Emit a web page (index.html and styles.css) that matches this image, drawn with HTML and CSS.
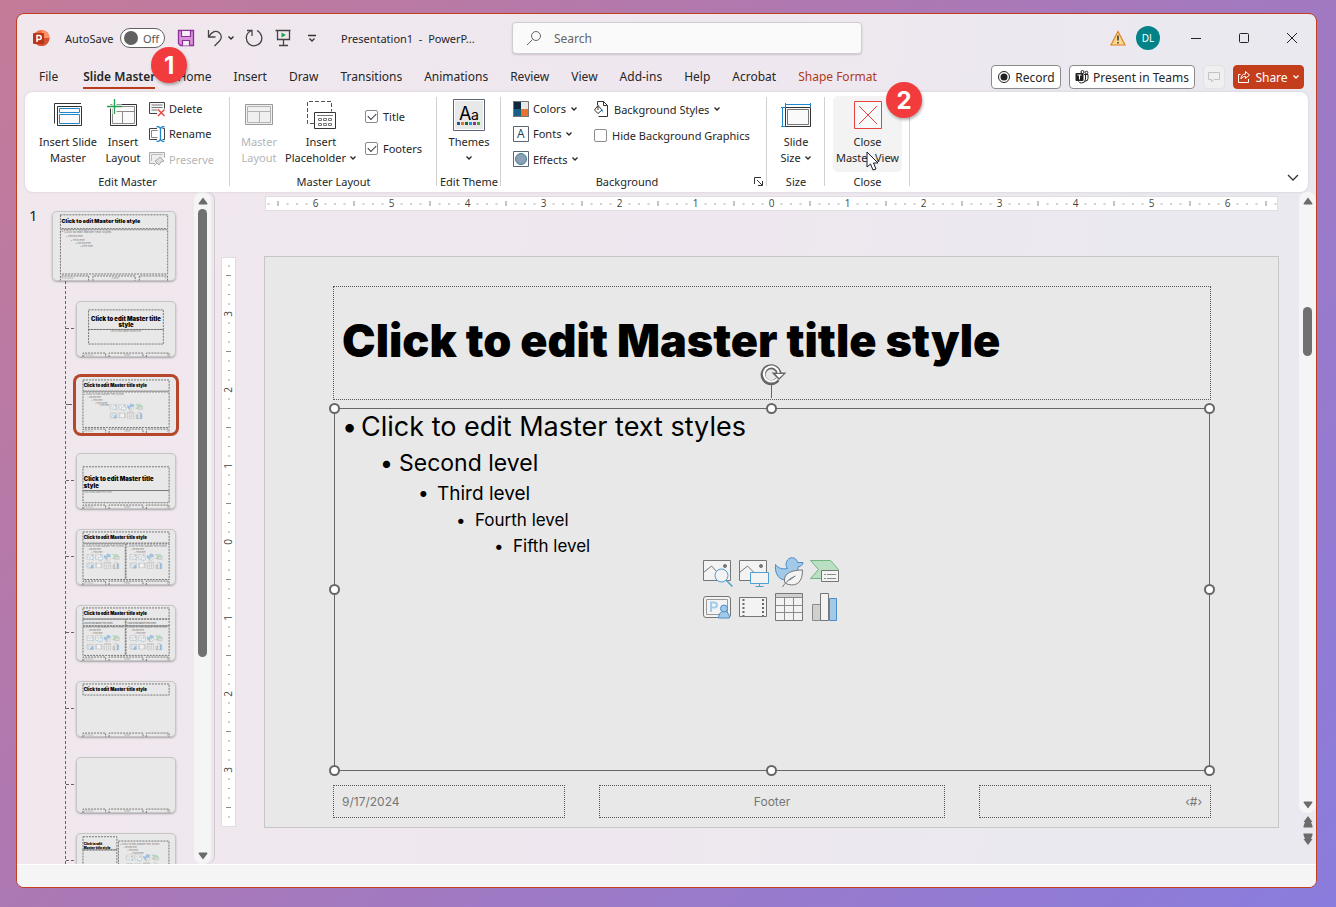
FILE: index.html
```html
<!DOCTYPE html>
<html lang="en">
<head>
    <meta charset="UTF-8">
    <meta name="viewport" content="width=device-width, initial-scale=1.0">
    <title>Presentation1 - PowerPoint</title>
    <link rel="stylesheet" href="styles.css">
</head>
<body>
    <!-- Shared drawings -->
    <svg class="defs" aria-hidden="true">
        <symbol id="chevron" viewBox="0 0 8 8"><path d="M1.5 2.5L4 5l2.500-2.500" fill="none" stroke="currentColor" stroke-width="1.300"/></symbol>
        <symbol id="arrow-up" viewBox="0 0 10 8"><path d="M5 .5L9.500 6.500q0 1-1 1h-7q-1 0-1-1z"/></symbol>
        <symbol id="arrow-down" viewBox="0 0 10 8"><path d="M5 7.500L9.500 1.500q0-1-1-1h-7q-1 0-1 1z"/></symbol>

        <!-- Eight content icons of an empty placeholder -->
        <symbol id="content-icons" viewBox="0 0 137 66">
            <g fill="#f3f3f3" stroke="#767676">
                <path d="M.5 3.500h27v20H.5zM36.500 3.500h27v20h-27z"/>
                <path d="M.5 15.500L8.500 9l13 14M36.500 15.500L44.500 9l9 9" fill="none"/>
                <circle cx="22" cy="9" r="1.500" fill="#767676"/>
                <circle cx="58" cy="9" r="1.500" fill="#767676"/>
            </g>
            <g fill="#f3f3f3" stroke="#4f9fd0">
                <path d="M23.500 23.500l6 6" stroke-width="1.500"/>
                <circle cx="18.500" cy="18.500" r="6.500"/>
                <path d="M47.500 15.500h18v11h-18zM56.500 27v3M52.500 29.500h8"/>
            </g>
            <path d="M72.500 7.500c3 4 7 5 12 4-1.500-2-2-4-1-6.500 2-6 10-5.500 11 .5h5.500c0 2-2 4-5 4.500 0 6-4 13-10 13-9 1-13.500-6-12.500-15.500z" fill="#a3c9e8" stroke="#4a8ec9"/>
            <path d="M99.500 13c-10 0-19 3-18 11 0 2 2 3 4 3.500 9 2 14-3 14-14.500zM79.500 30c4-6 8-9 13-11" fill="#f3f3f3" stroke="#767676"/>
            <path d="M107.500 3.500h20l8 9-8 9h-20l8-9z" fill="#bbdfc2" stroke="#72b583"/>
            <path d="M118.500 13.500h17v11h-17z" fill="#f3f3f3" stroke="#767676"/>
            <path d="M121 17.500h2m1 0h9M121 21.500h2m1 0h9" stroke="#8a8a8a"/>
            <rect x=".5" y="39.500" width="27" height="21" rx="2.500" fill="#f3f3f3" stroke="#767676"/>
            <path d="M3.500 42.500h21v15h-21z" fill="none" stroke="#9a9a9a"/>
            <path d="M8 55v-9.500h3c4 0 4 5 0 5H8" fill="none" stroke="#a3cdea" stroke-width="2"/>
            <path d="M15.500 61c0-9 11-9 11 0z" fill="#a3c9e8" stroke="#4a8ec9"/>
            <circle cx="21" cy="51.500" r="3.500" fill="#a3c9e8" stroke="#4a8ec9"/>
            <path d="M36.500 40.500h27v19h-27z" fill="#f3f3f3" stroke="#767676"/>
            <path d="M40.500 42v17M60 42v17" stroke="#686868" stroke-width="2" stroke-dasharray="2 2"/>
            <path d="M72.500 36.500h27v27h-27z" fill="#f3f3f3" stroke="#767676"/>
            <path d="M73 37h26v3H73z" fill="#d0d0ce"/>
            <path d="M72.500 40.500h27m-27 8h27m-27 7h27m-18-15v23m9-23v23" fill="none" stroke="#8a8a8a"/>
            <path d="M109.500 47.500h8v16h-8z" fill="#d0d0ce" stroke="#8a8a8a"/>
            <path d="M126.500 41.500h7v22h-7z" fill="#a3c9e8" stroke="#4a8ec9"/>
            <path d="M117.500 36.500h8v27h-8z" fill="#f3f3f3" stroke="#767676"/>
        </symbol>

        <!-- Thumbnail parts, in slide coordinates -->
        <symbol id="part-footers" viewBox="0 0 1014 570">
            <path class="frame" d="M69 570v-40h231v40M335 570v-40h345v40M714 570v-40h231v40"/>
            <g class="tiny faded"><text x="78" y="556">9/17/2024</text><text x="489" y="556">Footer</text><text x="922" y="556">#</text></g>
        </symbol>
        <symbol id="part-title" viewBox="0 0 1014 570">
            <path class="frame" d="M69 30h877v113H69z"/>
            <text class="headline" x="78" y="101">Click to edit Master title style</text>
        </symbol>
        <symbol id="part-levels" viewBox="0 0 1014 570">
            <text class="level" x="78" y="180">• Click to edit Master text styles</text>
            <g class="tiny"><text x="115" y="214">• Second level</text><text x="153" y="243">• Third level</text><text x="191" y="270">• Fourth level</text><text x="229" y="296">• Fifth level</text></g>
        </symbol>
        <symbol id="part-half" viewBox="0 0 1014 570">
            <text class="level" x="78" y="180">• Click to edit Master text styles</text>
            <g class="tiny"><text x="115" y="214">• Second level</text><text x="153" y="243">• Third level</text></g>
            <use href="#content-icons" x="90" y="250" width="370" height="160"/>
        </symbol>
    </svg>

    <div class="window">
        <header class="titlebar">
            <svg class="app-logo" viewBox="0 0 18 18" aria-hidden="true">
                <circle cx="9.500" cy="9" r="8" fill="#ed6c47"/>
                <path d="M9.500 1a8 8 0 0 1 8 8h-8z" fill="#ff9068"/>
                <path d="M1.500 9h16a8 8 0 0 1-16 0z" fill="#d35230"/>
                <rect x="1" y="4" width="11" height="11" rx="1" fill="#b7351a"/>
                <path d="M5 13V6.500h2c3 0 3 4 0 4H5" fill="none" stroke="#fff" stroke-width="1.500"/>
            </svg>
            <div class="autosave">
                <span id="autosave-label">AutoSave</span>
                <button class="toggle" role="switch" aria-checked="false" aria-labelledby="autosave-label"><i class="knob"></i>Off</button>
            </div>
            <div class="quick-access">
                <button class="icon-btn" aria-label="Save">
                    <svg width="18" height="18" viewBox="0 0 18 18"><path d="M1.500 1.500h15v15H3.500l-2-2z" fill="#d893dc" stroke="#8d2f99" stroke-width="1.300"/><path d="M4.500 1.500h9v6h-9zM5.500 16.500v-5h7v5" fill="#f7edf7" stroke="#8d2f99" stroke-width="1.200"/></svg>
                </button>
                <button class="icon-btn" aria-label="Undo">
                    <svg width="18" height="18" viewBox="0 0 18 18"><path d="M2.500 1v7h7M3 7.500C6 2.500 10 1 13 3.500s3 6 .5 8.500L8.500 17" fill="none" stroke="#444" stroke-width="1.300"/></svg>
                </button>
                <button class="icon-btn narrow" aria-label="Undo history"><svg class="chev"><use href="#chevron"/></svg></button>
                <button class="icon-btn" aria-label="Repeat">
                    <svg width="18" height="18" viewBox="0 0 18 18"><path d="M2 1.500h5V7M7 1.500C-.5 4 .5 12 4 15s9 2 11.500-1.500S17 4 12 1.500" fill="none" stroke="#444" stroke-width="1.300"/></svg>
                </button>
                <button class="icon-btn" aria-label="Start from beginning">
                    <svg width="18" height="18" viewBox="0 0 18 18"><path d="M1.500 1.500h15M3.500 1.500v9h12v-9M9.500 10.500v6M5 16.500h9" fill="none" stroke="#444" stroke-width="1.300"/><path d="M7.500 3.500v5l4.500-2.500z" fill="#21a150"/></svg>
                </button>
                <button class="icon-btn last" aria-label="Customize toolbar">
                    <svg width="10" height="10" viewBox="0 0 10 10"><path d="M1 2.500h8M2.500 5.500L5 8l2.500-2.500" fill="none" stroke="#333" stroke-width="1.300"/></svg>
                </button>
            </div>
            <div class="doc-name">Presentation1&nbsp; -&nbsp; PowerP...</div>
            <label class="search">
                <svg width="16" height="16" viewBox="0 0 16 16" aria-hidden="true"><circle cx="10" cy="6" r="4.500" fill="none" stroke="#666"/><path d="M6.500 9.500L1 15" stroke="#666"/></svg>
                <input type="text" placeholder="Search" aria-label="Search">
            </label>
            <div class="account">
                <svg width="16" height="16" viewBox="0 0 16 16" aria-label="Warning"><path d="M8 1.500L15 15H1z" fill="#fbd98e" stroke="#e08122" stroke-width="1.200"/><path d="M8 5.500v5M8 12v1.500" stroke="#333" stroke-width="1.500"/></svg>
                <button class="avatar">DL</button>
            </div>
            <div class="window-controls">
                <button aria-label="Minimize"><svg width="12" height="12"><path d="M1 6.500h10" stroke="#222"/></svg></button>
                <button aria-label="Maximize"><svg width="12" height="12"><rect x="1.500" y="1.500" width="9" height="9" rx="1" fill="none" stroke="#222"/></svg></button>
                <button aria-label="Close"><svg width="12" height="12"><path d="M1 1l10 10M11 1L1 11" stroke="#222"/></svg></button>
            </div>
        </header>

        <nav class="tabs">
            <button class="tab file">File</button>
            <div class="tab-wrap">
                <button class="tab active">Slide Master</button>
                <span class="badge badge-one">1</span>
            </div>
            <button class="tab">Home</button>
            <button class="tab">Insert</button>
            <button class="tab">Draw</button>
            <button class="tab">Transitions</button>
            <button class="tab">Animations</button>
            <button class="tab">Review</button>
            <button class="tab">View</button>
            <button class="tab">Add-ins</button>
            <button class="tab">Help</button>
            <button class="tab">Acrobat</button>
            <button class="tab contextual">Shape Format</button>
            <div class="tab-actions">
                <button class="action record"><svg width="14" height="14" viewBox="0 0 14 14"><circle cx="7" cy="7" r="5.500" fill="none" stroke="#222"/><circle cx="7" cy="7" r="3.500" fill="#222"/></svg>Record</button>
                <button class="action teams"><svg width="14" height="14" viewBox="0 0 14 14"><rect x=".5" y="3" width="8" height="8" rx="1" fill="#222"/><path d="M2.500 5h4M4.500 5v4.500" stroke="#fff"/><circle cx="7.500" cy="2" r="1.500" fill="none" stroke="#222"/><circle cx="11.500" cy="2.500" r="1.300" fill="none" stroke="#222"/><path d="M9 4.500h4v4q0 3-3 2.500M10.500 5v4q0 4-4 4-2 0-3-1.500" fill="none" stroke="#222"/></svg>Present in Teams</button>
                <button class="action comment" aria-label="Comments"><svg width="14" height="14" viewBox="0 0 14 14"><path d="M1.500 2.500h11v7H7L4.500 12V9.500h-3z" fill="none" stroke="#c2c2c2"/></svg></button>
                <button class="action share"><svg width="14" height="14" viewBox="0 0 14 14"><path d="M3.500 4.500h-2v8h10V9M8.500 1.500l4 3.500-4 3.500v-2c-2.500 0-3.500 1-4.500 2.500 0-3 1.500-5 4.500-5z" fill="none" stroke="#fff"/></svg>Share<svg class="chev"><use href="#chevron"/></svg></button>
            </div>
        </nav>

        <section class="ribbon">
            <div class="group edit-master">
                <div class="group-body">
                    <button class="big">
                        <svg width="32" height="32" viewBox="0 0 32 32"><path d="M2.500 24.500v-20H29" fill="none" stroke="#333"/><path d="M5.500 7.500h24v19h-24z" fill="#fafafa" stroke="#333"/><path d="M7.500 9.500h20v4h-20zM7.500 15.500h20v9h-20z" fill="none" stroke="#1e87cf"/></svg>
                        Insert Slide<br>Master
                    </button>
                    <button class="big medium">
                        <svg width="32" height="32" viewBox="0 0 32 32"><path d="M3.500 5.500h26v21h-26z" fill="#fafafa" stroke="#333"/><path d="M5.500 7.500h22v17h-22zM5.500 12.500h22M15.500 12.500v12" fill="none" stroke="#8a8a8a"/><path d="M0 7.500h15M7.500 0v15" stroke="#fff" stroke-width="4"/><path d="M0 7.500h15M7.500 0v15" stroke="#21a150" stroke-width="1.300"/></svg>
                        Insert<br>Layout
                    </button>
                    <div class="stack">
                        <button class="small"><svg width="16" height="16" viewBox="0 0 16 16"><path d="M8 12.500H.5v-11h15v6" fill="#f6f6f6" stroke="#444"/><path d="M2.500 4h11M2.500 6.500h11M2.500 9h6" stroke="#777"/><path d="M9 8.500l6.500 6.500M15.500 8.500L9 15" stroke="#e8413c" stroke-width="1.300"/></svg>Delete</button>
                        <button class="small"><svg width="16" height="16" viewBox="0 0 16 16"><path d="M8 2.500H.5v11H8M13.500 2.500h2v11h-2" fill="none" stroke="#444"/><path d="M8.500 4.500h-6v7h6" fill="none" stroke="#888"/><path d="M7.500.5q4 0 4 3v9q0 3-4 3M15.500.5q-4 0-4 3v9q0 3 4 3" fill="none" stroke="#1e87cf" stroke-width="1.300"/></svg>Rename</button>
                        <button class="small" disabled><svg width="16" height="16" viewBox="0 0 16 16"><path d="M6 12.500H.5v-11h15v5" fill="#eee" stroke="#aaa"/><path d="M2.500 3.500h11M2.500 10V3.500" stroke="#bbb"/><path d="M11 6l4 4-3 1-2 3-4-4 3-2zM8 12l-3 3" fill="#ddd" stroke="#aaa"/></svg>Preserve</button>
                    </div>
                </div>
                <div class="group-label">Edit Master</div>
            </div>

            <div class="group master-layout">
                <div class="group-body">
                    <button class="big medium" disabled>
                        <svg width="32" height="32" viewBox="0 0 32 32"><path d="M2.500 5.500h27v20h-27z" fill="#f0f0f0" stroke="#999"/><path d="M4.500 7.500h23v16h-23zM4.500 12.500h23M16.500 12.500v11" fill="none" stroke="#b3b3b3"/></svg>
                        Master<br>Layout
                    </button>
                    <button class="big wide">
                        <svg width="32" height="32" viewBox="0 0 32 32"><path d="M9 24.500H2.500v-22h24v10" fill="none" stroke="#555" stroke-dasharray="4 2"/><path d="M9.500 13.500h21v16h-21z" fill="#fff" stroke="#333"/><path d="M12 16.500h16M13.500 19.500h3v2h-3zM18.500 19.500h3v2h-3zM23.500 19.500h3v2h-3zM13.500 24.500h3v2h-3zM18.500 24.500h3v2h-3zM23.500 24.500h3v2h-3z" fill="none" stroke="#777"/></svg>
                        Insert<br>Placeholder <svg class="chev"><use href="#chevron"/></svg>
                    </button>
                    <div class="checks">
                        <label class="check"><input type="checkbox" checked>Title</label>
                        <label class="check"><input type="checkbox" checked>Footers</label>
                    </div>
                </div>
                <div class="group-label">Master Layout</div>
            </div>

            <div class="group edit-theme">
                <div class="group-body">
                    <button class="big">
                        <svg width="32" height="32" viewBox="0 0 32 32"><path d="M.5.5h31v31H.5z" fill="#fff" stroke="#5b6577"/><path d="M2 2h28v28H2z" fill="#e8e8e8"/><text class="aa" x="6" y="21">A</text><text class="aa lower" x="18" y="21">a</text><path d="M4 23h3v3H4z" fill="#1b5e8c"/><path d="M8 23h3v3H8z" fill="#e97132"/><path d="M12 23h3v3h-3z" fill="#196b24"/><path d="M16 23h3v3h-3z" fill="#0f9ed5"/><path d="M20 23h3v3h-3z" fill="#a02b93"/><path d="M24 23h3v3h-3z" fill="#4ea72e"/></svg>
                        Themes<br><svg class="chev"><use href="#chevron"/></svg>
                    </button>
                </div>
                <div class="group-label">Edit Theme</div>
            </div>

            <div class="group background">
                <div class="group-body">
                    <div class="stack first">
                        <button class="small"><svg width="16" height="16" viewBox="0 0 16 16"><path d="M0 0h8v8H0z" fill="#0e2841"/><path d="M8 0h8v8H8z" fill="#e8e8e8"/><path d="M0 8h8v8H0z" fill="#156082"/><path d="M8 8h8v8H8z" fill="#e97132"/><path d="M.5.5h15v15H.5z" fill="none" stroke="#777"/></svg>Colors<svg class="chev"><use href="#chevron"/></svg></button>
                        <button class="small"><svg width="16" height="16" viewBox="0 0 16 16"><path d="M.5.5h15v15H.5z" fill="#fff" stroke="#5b6577"/><text class="font-a" x="4" y="12">A</text></svg>Fonts<svg class="chev"><use href="#chevron"/></svg></button>
                        <button class="small"><svg width="16" height="16" viewBox="0 0 16 16"><path d="M.5.5h15v15H.5z" fill="#fff" stroke="#5b6577"/><circle cx="8" cy="8" r="5.500" fill="#8ba0b4" stroke="#3d7f96"/></svg>Effects<svg class="chev"><use href="#chevron"/></svg></button>
                    </div>
                    <div class="stack second">
                        <button class="small"><svg width="16" height="16" viewBox="0 0 16 16"><path d="M3.500 4V.5h6l4 4v11h-9M9.500.5v4h4" fill="none" stroke="#333"/><path d="M4 4.500l4 4.500-4 3.500L.5 9zM4 4.500V9" fill="#fff" stroke="#333"/><path d="M7 8l2 1v3z" fill="#3f9bdc"/></svg>Background Styles<svg class="chev"><use href="#chevron"/></svg></button>
                        <label class="check"><input type="checkbox">Hide Background Graphics</label>
                    </div>
                </div>
                <div class="group-label">Background</div>
                <button class="launcher" aria-label="Format background"><svg width="9" height="9" viewBox="0 0 9 9"><path d="M.5 7V.5H7M3 3l5 5M8.500 4v4.500H4" fill="none" stroke="#333"/></svg></button>
            </div>

            <div class="group size">
                <div class="group-body">
                    <button class="big">
                        <svg width="32" height="32" viewBox="0 0 32 32"><path d="M5.500 8.500h25v19h-25z" fill="#fafafa" stroke="#333"/><path d="M7.500 10.500h21v15h-21z" fill="none" stroke="#777"/><path d="M5.500 4v4M5.500 5.500h25M30.500 4v4M1 8.500h4M2.500 8.500v19M1 27.500h4" fill="none" stroke="#1e87cf"/></svg>
                        Slide<br>Size <svg class="chev"><use href="#chevron"/></svg>
                    </button>
                </div>
                <div class="group-label">Size</div>
            </div>

            <div class="group close">
                <div class="group-body">
                    <button class="big hovered">
                        <svg width="32" height="32" viewBox="0 0 32 32"><path d="M2.500 2.500h27v27h-27z" fill="#fafafa" stroke="#e8413c"/><path d="M7 7l18 18M25 7L7 25" stroke="#e8413c"/></svg>
                        Close<br>Master View
                    </button>
                    <span class="badge badge-two">2</span>
                    <svg class="cursor" width="13" height="20" viewBox="0 0 13 20" aria-hidden="true"><path d="M1 1v15l3.500-3 2.500 6 3-1-2.500-6H12z" fill="#fff" stroke="#1a1a2a"/></svg>
                </div>
                <div class="group-label">Close</div>
            </div>
            <button class="collapse" aria-label="Collapse ribbon"><svg width="12" height="8"><path d="M1 1l5 5 5-5" fill="none" stroke="#333" stroke-width="1.300"/></svg></button>
        </section>

        <main class="workspace">
            <aside class="slides">
                <span class="number">1</span>
                <button class="thumb master" aria-label="Slide master">
                    <svg viewBox="0 0 1014 570"><use href="#part-title"/><path class="frame" d="M69 152h877v362H69z"/><use href="#part-levels"/><use href="#part-footers"/></svg>
                </button>
                <div class="layouts">
                    <button class="thumb" aria-label="Title slide">
                        <svg viewBox="0 0 1014 570"><path class="frame" d="M126 90h761v200H126zM126 290h761v148H126z"/><g class="headline large" text-anchor="middle"><text x="507" y="200">Click to edit Master title</text><text x="507" y="268">style</text></g><text class="tiny" x="507" y="316" text-anchor="middle">Click to edit Master subtitle style</text><use href="#part-footers"/></svg>
                    </button>
                    <button class="thumb selected" aria-label="Title and content">
                        <svg viewBox="0 0 1014 570"><use href="#part-title"/><path class="frame" d="M69 152h877v362H69z"/><use href="#part-levels"/><use href="#content-icons" x="320" y="270" width="384" height="160"/><use href="#part-footers"/></svg>
                    </button>
                    <button class="thumb" aria-label="Section header">
                        <svg viewBox="0 0 1014 570"><path class="frame" d="M69 140h877v242H69zM69 382h877v124H69z"/><g class="headline large"><text x="78" y="288">Click to edit Master title</text><text x="78" y="356">style</text></g><text class="tiny" x="78" y="404">Click to edit Master text styles</text><use href="#part-footers"/></svg>
                    </button>
                    <button class="thumb" aria-label="Two content">
                        <svg viewBox="0 0 1014 570"><use href="#part-title"/><path class="frame" d="M69 152h431v362H69zM507 152h439v362H507z"/><use href="#part-half"/><use href="#part-half" x="438"/><use href="#part-footers"/></svg>
                    </button>
                    <button class="thumb" aria-label="Comparison">
                        <svg viewBox="0 0 1014 570"><use href="#part-title"/><path class="frame" d="M69 143h431v70H69zM507 143h439v70H507zM69 213h431v300H69zM507 213h439v300H507z"/><g class="tiny strong"><text x="78" y="196">Click to edit Master text styles</text><text x="520" y="196">Click to edit Master text styles</text></g><use href="#part-half" y="54"/><use href="#part-half" x="438" y="54"/><use href="#part-footers"/></svg>
                    </button>
                    <button class="thumb" aria-label="Title only">
                        <svg viewBox="0 0 1014 570"><use href="#part-title"/><use href="#part-footers"/></svg>
                    </button>
                    <button class="thumb" aria-label="Blank">
                        <svg viewBox="0 0 1014 570"><use href="#part-footers"/></svg>
                    </button>
                    <button class="thumb" aria-label="Content with caption">
                        <svg viewBox="0 0 1014 570"><path class="frame" d="M69 38h345v134H69zM69 172h345v320H69zM430 82h514v400H430z"/><g class="headline sub"><text x="78" y="126">Click to edit</text><text x="78" y="164">Master title style</text></g><text class="level" x="440" y="118">• Click to edit Master text styles</text><g class="tiny"><text x="480" y="152">• Second level</text><text x="515" y="184">• Third level</text><text x="560" y="214">• Fourth level</text></g><use href="#content-icons" x="490" y="215" width="370" height="160"/></svg>
                    </button>
                </div>
            </aside>
            <div class="scrollbar left">
                <svg class="arrow"><use href="#arrow-up"/></svg>
                <div class="track"><div class="grip long"></div></div>
                <svg class="arrow"><use href="#arrow-down"/></svg>
            </div>

            <div class="editor">
                <svg class="ruler horizontal" height="13" aria-hidden="true">
                    <!-- One inch of ticks, used by both rulers -->
                    <pattern id="inch" x="-38" y="0" width="76" height="13" patternUnits="userSpaceOnUse">
                        <path d="M.5 4v5" stroke="#8a8a8a"/>
                        <path d="M10 6v2M19.500 6v2M29 6v2M48 6v2M57.500 6v2M67 6v2" stroke="#a0a0a0"/>
                    </pattern>
                    <svg x="50%" overflow="visible">
                        <rect x="-600" width="1200" height="13" fill="url(#inch)"/>
                        <g><text x="-456" y="10">6</text><text x="-380" y="10">5</text><text x="-304" y="10">4</text><text x="-228" y="10">3</text><text x="-152" y="10">2</text><text x="-76" y="10">1</text><text x="0" y="10">0</text><text x="76" y="10">1</text><text x="152" y="10">2</text><text x="228" y="10">3</text><text x="304" y="10">4</text><text x="380" y="10">5</text><text x="456" y="10">6</text></g>
                    </svg>
                </svg>
                <svg class="ruler vertical" width="13" aria-hidden="true">
                    <svg y="50%" overflow="visible">
                        <g transform="rotate(-90)">
                            <rect x="-400" width="800" height="13" fill="url(#inch)"/>
                            <text x="228" y="10">3</text><text x="152" y="10">2</text><text x="76" y="10">1</text><text x="0" y="10">0</text><text x="-76" y="10">1</text><text x="-152" y="10">2</text><text x="-228" y="10">3</text>
                        </g>
                    </svg>
                </svg>

                <article class="slide">
                    <div class="placeholder title-box"><h1>Click to edit Master title style</h1></div>
                    <div class="content-box">
                        <ul>
                            <li class="l1">Click to edit Master text styles
                                <ul><li class="l2">Second level
                                    <ul><li class="l3">Third level
                                        <ul><li class="l4">Fourth level
                                            <ul><li class="l5">Fifth level</li></ul>
                                        </li></ul>
                                    </li></ul>
                                </li></ul>
                            </li>
                        </ul>
                        <svg class="insert-icons" width="137" height="66"><use href="#content-icons"/></svg>
                        <svg class="rotate" width="28" height="34" viewBox="0 0 28 34" aria-hidden="true">
                            <path d="M13.500 20v14" stroke="#666"/>
                            <path d="M19.500 15.500a8 8 0 1 1 1.500-6" fill="none" stroke="#666" stroke-width="5"/>
                            <path d="M13.500 8.500h15L21 16z" fill="#666"/>
                            <path d="M19 15a7.500 7.500 0 1 1 1.800-6" fill="none" stroke="#fff" stroke-width="2"/>
                            <path d="M17.500 10h8L21 14z" fill="#fff"/>
                        </svg>
                        <i class="handle n w"></i><i class="handle n c"></i><i class="handle n e"></i>
                        <i class="handle m w"></i><i class="handle m e"></i>
                        <i class="handle s w"></i><i class="handle s c"></i><i class="handle s e"></i>
                    </div>
                    <footer class="slide-footer">
                        <div class="placeholder">9/17/2024</div>
                        <div class="placeholder center">Footer</div>
                        <div class="placeholder right">‹#›</div>
                    </footer>
                </article>
            </div>

            <div class="right-rail">
                <div class="scrollbar">
                    <svg class="arrow"><use href="#arrow-up"/></svg>
                    <div class="track"><div class="grip short"></div></div>
                    <svg class="arrow"><use href="#arrow-down"/></svg>
                </div>
                <button class="page-btn" aria-label="Previous slide"><svg width="10" height="12"><path d="M5 0l4.500 6H8l1.500 4v1.500h-9V10L2 6H.5z"/></svg></button>
                <button class="page-btn" aria-label="Next slide"><svg width="10" height="12"><path d="M5 12L.5 6H2L.5 2V.5h9V2L8 6h1.500z"/></svg></button>
            </div>
        </main>
        <div class="statusbar"></div>
    </div>
</body>
</html>
```
FILE: styles.css
```css
* {
    box-sizing: border-box;
}
body {
    margin: 0;
    padding: 13px 19px 19px 16px;
    min-height: 100vh;
    display: flex;
    font-family: "Noto Sans", "Open Sans", sans-serif;
    font-size: 12px;
    color: #262626;
    background: linear-gradient(135deg, #c47b98 0%, #ad78b3 40%, #9a7aca 70%, #8a7cdd 100%);
}
button {
    font: inherit;
    color: inherit;
    padding: 0;
    border: none;
    background: none;
    cursor: pointer;
}
button:disabled {
    color: #b5b5b5;
}
svg {
    display: block;
    flex: none;
}
.defs {
    display: none;
}
.window {
    flex: 1;
    min-width: 0;
    display: flex;
    flex-direction: column;
    border: 1px solid #c43e1c;
    border-radius: 8px;
    overflow: hidden;
    background: linear-gradient(100deg, #f1e8ee 0%, #efe7ef 50%, #ebe9f0 80%);
}
.chev {
    width: 8px;
    height: 8px;
}

/* Title bar */
.titlebar {
    display: flex;
    align-items: center;
    height: 48px;
    padding-left: 15px;
}
.app-logo {
    width: 18px;
    height: 18px;
    margin-right: 15px;
}
.autosave {
    display: flex;
    align-items: center;
    justify-content: space-between;
    width: 100px;
    font-size: 11px;
}
.toggle {
    display: flex;
    align-items: center;
    gap: 5px;
    width: 45px;
    height: 20px;
    padding-left: 3px;
    border: 1px solid #616161;
    border-radius: 10px;
    background: #fff;
    color: #555;
}
.knob {
    width: 14px;
    height: 14px;
    border-radius: 50%;
    background: #616161;
}
.quick-access {
    display: flex;
    align-items: center;
    margin-left: 12px;
}
.icon-btn {
    margin-right: 11px;
}
.icon-btn.narrow {
    margin: 0 10px 0 -8px;
}
.icon-btn.last {
    margin: 0 0 0 4px;
}
.doc-name {
    margin-left: 24px;
    width: 171px;
    font-size: 11px;
    white-space: nowrap;
}
.search {
    display: flex;
    align-items: center;
    gap: 10px;
    width: 350px;
    height: 32px;
    padding-left: 13px;
    border: 1px solid #d0cdd0;
    border-radius: 4px;
    background: #fafafa;
    box-shadow: 0 1px 2px rgba(0, 0, 0, 0.15);
}
.search input {
    flex: 1;
    min-width: 0;
    border: none;
    outline: none;
    background: none;
    font: inherit;
}
.search input::placeholder {
    color: #666;
}
.account {
    display: flex;
    align-items: center;
    gap: 10px;
    margin-left: auto;
}
.avatar {
    width: 24px;
    height: 24px;
    border-radius: 50%;
    background: #038387;
    color: #fff;
    font-size: 10px;
}
.window-controls {
    display: flex;
    margin-left: 12px;
}
.window-controls button {
    display: grid;
    place-items: center;
    width: 48px;
    height: 32px;
}

/* Tabs */
.tabs {
    display: flex;
    align-items: center;
    gap: 22px;
    height: 30px;
    padding: 0 12px 0 22px;
    white-space: nowrap;
}
.tab {
    line-height: 24px;
}
.tab.file {
    margin-right: 3px;
}
.tab-wrap {
    position: relative;
}
.tab.active {
    font-weight: 600;
    box-shadow: inset 0 -2px #b83b1d;
}
.tab.contextual {
    color: #b03a1c;
}
.tab-actions {
    display: flex;
    gap: 8px;
    margin-left: auto;
}
.action {
    display: flex;
    align-items: center;
    justify-content: center;
    gap: 4px;
    height: 24px;
    border: 1px solid #8a8a8a;
    border-radius: 4px;
    background: #fff;
}
.record {
    width: 70px;
}
.teams {
    width: 126px;
}
.comment {
    width: 22px;
    border-color: #e3e1e3;
    background: #f0eff0;
}
.share {
    width: 71px;
    border-color: #c43e1c;
    background: #c43e1c;
    color: #fff;
}
.badge {
    position: absolute;
    z-index: 2;
    display: grid;
    place-items: center;
    width: 36px;
    height: 36px;
    border-radius: 50%;
    background: #f23b3d;
    box-shadow: 1px 2px 3px rgba(0, 0, 0, 0.3);
    color: #fff;
    font: bold 24px "Inter", sans-serif;
}
.badge-one {
    left: 68px;
    top: -18px;
}
.badge-two {
    right: -12px;
    top: -14px;
}

/* Ribbon */
.ribbon {
    position: relative;
    display: flex;
    height: 100px;
    margin: 0 8px;
    border-radius: 8px;
    background: #fff;
    box-shadow: 0 0 3px rgba(0, 0, 0, 0.12);
    font-size: 11px;
    white-space: nowrap;
}
.group {
    position: relative;
    padding-top: 4px;
}
.group::after {
    content: "";
    position: absolute;
    right: 0;
    top: 5px;
    bottom: 6px;
    width: 1px;
    background: #d1d1d1;
}
.group-body {
    position: relative;
    display: flex;
    height: 76px;
}
.group-label {
    line-height: 20px;
    text-align: center;
}
.edit-master {
    width: 205px;
}
.master-layout {
    width: 207px;
}
.edit-theme {
    width: 64px;
}
.background {
    width: 266px;
}
.background .group-label {
    padding-right: 14px;
}
.size {
    width: 58px;
}
.close {
    width: 85px;
}
.edit-master .group-body {
    padding-left: 11px;
}
.master-layout .group-body {
    padding-left: 5px;
}
.close .group-body {
    padding: 0 8px;
}
.big {
    display: block;
    width: 64px;
    padding: 3px 0 6px;
    line-height: 16px;
    text-align: center;
    border-radius: 5px;
}
.big > svg:first-child {
    margin: 0 auto 3px;
}
.big .chev {
    display: inline-block;
}
.big.medium {
    width: 46px;
}
.big.wide {
    width: 76px;
}
.edit-theme .big,
.size .big,
.close .big {
    width: 100%;
}
.master-layout .medium {
    width: 48px;
}
.big.hovered {
    background: #f3f3f3;
}
.aa {
    font: 18px "Inter", sans-serif;
}
.aa.lower {
    font-size: 14px;
}
.font-a {
    font: 12px "Open Sans", sans-serif;
    fill: #1a3a5c;
}
.stack {
    display: flex;
    flex-direction: column;
    align-items: flex-start;
    margin-left: 3px;
}
.stack.first {
    width: 81px;
    margin-left: 12px;
}
.stack.second {
    margin-left: 0;
}
.stack .small,
.stack .check {
    height: 26px;
}
.small {
    display: flex;
    align-items: center;
    gap: 4px;
}
.checks {
    display: flex;
    flex-direction: column;
    gap: 6px;
    padding-top: 7px;
    margin-left: 6px;
}
.checks .check {
    height: 26px;
}
.check {
    display: flex;
    align-items: center;
    gap: 5px;
}
.check input {
    appearance: none;
    display: grid;
    place-items: center;
    width: 13px;
    height: 13px;
    margin: 0;
    border: 1px solid #8a8a8a;
    border-radius: 2px;
    background: #fff;
}
.check input:checked::before {
    content: "";
    width: 7px;
    height: 4px;
    margin-top: -2px;
    border-left: 1px solid #333;
    border-bottom: 1px solid #333;
    transform: rotate(-45deg);
}
.launcher {
    position: absolute;
    right: 4px;
    bottom: 6px;
}
.collapse {
    position: absolute;
    right: 9px;
    bottom: 10px;
}
.cursor {
    position: absolute;
    left: 41px;
    top: 55px;
}

/* Work area */
.workspace {
    flex: 1;
    min-height: 0;
    display: flex;
}
.slides {
    position: relative;
    width: 177px;
    height: 672px;
    padding: 19px 18px 0 35px;
    overflow: hidden;
}
.number {
    position: absolute;
    left: 12px;
    top: 13px;
    font-size: 15px;
    line-height: 20px;
}
.thumb {
    display: block;
    width: 100px;
    height: 56px;
    border-radius: 5px;
    background: #e8e8e8;
    box-shadow: inset 0 0 0 1px #c6c6c6, 0 1px 2px rgba(0, 0, 0, 0.3);
}
.thumb svg {
    width: 100%;
    height: 100%;
}
.thumb.master {
    width: 124px;
    height: 70px;
}
.thumb.selected {
    box-shadow: 0 0 0 3px #b7472a;
}
.layouts {
    position: relative;
    display: flex;
    flex-direction: column;
    gap: 20px;
    margin-left: 13px;
    padding: 20px 0 0 10px;
    border-left: 1px dashed #666;
}
.layouts .thumb {
    position: relative;
    flex: none;
}
.layouts .thumb::before {
    content: "";
    position: absolute;
    left: -10px;
    top: 27px;
    width: 8px;
    border-top: 1px dashed #666;
}
.layouts .thumb.selected::before {
    width: 6px;
}
.frame {
    fill: none;
    stroke: #777;
    stroke-width: 1px;
    stroke-dasharray: 2 1;
    vector-effect: non-scaling-stroke;
}
.headline {
    font: 900 44px "Inter", sans-serif;
    fill: #000;
}
.headline.large {
    font-size: 60px;
}
.headline.sub {
    font-size: 32px;
}
.level {
    font: 27px "Inter", sans-serif;
    fill: #777;
}
.tiny {
    font: 20px "Inter", sans-serif;
    fill: #777;
}
.tiny.strong {
    font-weight: bold;
}
.tiny.faded {
    fill: #999;
}
.scrollbar {
    display: flex;
    flex-direction: column;
    align-items: center;
    width: 17px;
    padding: 5px 0 4px;
    border-radius: 8px;
    background: #f5f5f5;
    fill: #6b6b6b;
}
.scrollbar.left {
    box-shadow: 3px 0 0 #f0e7ee, 4px 0 0 #cfcacf;
}
.arrow {
    width: 10px;
    height: 8px;
}
.track {
    flex: 1;
    padding-top: 4px;
}
.grip {
    width: 9px;
    border-radius: 5px;
    background: #707070;
}
.grip.long {
    height: 448px;
}
.grip.short {
    height: 49px;
    margin-top: 98px;
}
.editor {
    flex: 1;
    min-width: 0;
    display: grid;
    grid-template-columns: 14px 1fr;
    grid-template-rows: 14px auto;
    gap: 45px 28px;
    align-content: start;
    padding: 5px 20px 0 11px;
}
.ruler {
    background: #fff;
    box-shadow: 0 0 0 1px #e0dde0;
    overflow: hidden;
}
.ruler text {
    font: 10px "Open Sans", sans-serif;
    text-anchor: middle;
    fill: #444;
    stroke: #fff;
    stroke-width: 3px;
    paint-order: stroke;
}
.horizontal {
    grid-column: 2;
    justify-self: center;
    width: calc(100% - 4px);
}
.vertical {
    height: calc(100% - 4px);
    align-self: center;
}
.slide {
    display: flex;
    flex-direction: column;
    aspect-ratio: 1015 / 572;
    padding: 29px 67px 9px 68px;
    border: 1px solid #c6c6c6;
    background: #e8e8e8;
    color: #000;
    font-family: "Inter", sans-serif;
}
.placeholder {
    border: 1px dotted #555;
    padding: 0 8px;
}
.title-box {
    display: flex;
    align-items: center;
    height: 114px;
    padding-bottom: 4px;
}
.title-box h1 {
    margin: 0;
    font-size: 45px;
    font-weight: 900;
    line-height: 52px;
}
.content-box {
    position: relative;
    flex: 1;
    margin: 8px 1px 14px;
    border: 1px solid #666;
}
.content-box ul {
    margin: 0;
    padding: 0 0 0 38px;
    list-style: none;
}
.content-box > ul {
    padding-left: 7px;
}
.content-box li::before {
    content: "•";
    display: inline-block;
    width: 19px;
}
.l1 {
    font-size: 27px;
    line-height: 36px;
}
.l2 {
    font-size: 23px;
    line-height: 36px;
}
.l3 {
    font-size: 19px;
    line-height: 26px;
}
.l4,
.l5 {
    font-size: 17px;
    line-height: 26px;
}
.insert-icons {
    position: absolute;
    left: calc(50% - 69px);
    top: calc(50% - 33px);
}
.rotate {
    position: absolute;
    left: calc(50% - 14px);
    top: -45px;
}
.handle {
    position: absolute;
    width: 11px;
    height: 11px;
    border: 2px solid #666;
    border-radius: 50%;
    background: #fff;
}
.handle.n {
    top: -6px;
}
.handle.m {
    top: calc(50% - 6px);
}
.handle.s {
    bottom: -6px;
}
.handle.w {
    left: -6px;
}
.handle.c {
    left: calc(50% - 6px);
}
.handle.e {
    right: -6px;
}
.slide-footer {
    display: grid;
    grid-template-columns: 232fr 346fr 232fr;
    gap: 34px;
    font-size: 12px;
    line-height: 31px;
    color: #767676;
}
.center {
    text-align: center;
}
.right {
    text-align: right;
}
.right-rail {
    display: flex;
    flex-direction: column;
    align-items: center;
    width: 17px;
    padding-bottom: 17px;
}
.right-rail .scrollbar {
    flex: 1;
}
.page-btn {
    height: 17px;
    fill: #6b6b6b;
}
.statusbar {
    height: 23px;
    border-top: 1px solid #fff;
    background: #f5f5f5;
}
```
